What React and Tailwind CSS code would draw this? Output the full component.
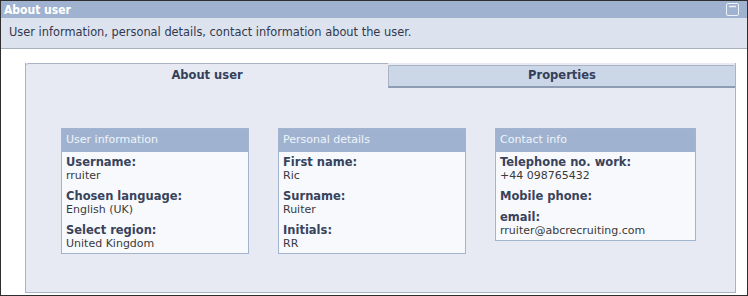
import React from 'react';

const cards = [
  {
    title: 'User information',
    width: 'w-[188px]',
    fields: [
      ['Username:', 'rruiter'],
      ['Chosen language:', 'English (UK)'],
      ['Select region:', 'United Kingdom'],
    ],
  },
  {
    title: 'Personal details',
    width: 'w-[188px]',
    fields: [
      ['First name:', 'Ric'],
      ['Surname:', 'Ruiter'],
      ['Initials:', 'RR'],
    ],
  },
  {
    title: 'Contact info',
    width: 'w-[201px]',
    fields: [
      ['Telephone no. work:', '+44 098765432'],
      ['Mobile phone:', ''],
      ['email:', 'rruiter@abcrecruiting.com'],
    ],
  },
];

const InfoCard = ({ card }) => (
  <div className={`${card.width} border border-[#a3b4cf] bg-[#f7f9fd]`}>
    <div className="h-[23px] bg-[#9fb3d1] px-[4px] flex items-center text-[11px] text-[#f0f3f9]">
      {card.title}
    </div>
    <div className="px-[4px] pt-[4px] pb-[3px] flex flex-col gap-[8px]">
      {card.fields.map(([label, value]) => (
        <div key={label} className="leading-[13px]">
          <div className="font-bold text-[#38435c] text-[11.5px]">{label}</div>
          {value && <div className="text-[#3a3a3a] text-[11px]">{value}</div>}
        </div>
      ))}
    </div>
  </div>
);

const App = () => {
  return (
    <div className="w-[748px] h-[296px] border border-[#2e2e2e] bg-white flex flex-col font-['DejaVu_Sans',sans-serif] overflow-hidden">
      <div className="h-[17px] bg-[#9fb3d1] flex items-center justify-between pl-[3px] pr-[8px]">
        <span className="text-white font-bold text-[12px] font-['DejaVu_Sans_Condensed','DejaVu_Sans',sans-serif]">About user</span>
        <svg width="13" height="13" viewBox="0 0 13 13">
          <rect x="0.5" y="0.5" width="12" height="12" rx="1.5" fill="none" stroke="#eef2f8" strokeWidth="1" />
          <line x1="3" y1="3.5" x2="10" y2="3.5" stroke="#eef2f8" strokeWidth="1.5" />
        </svg>
      </div>
      <div className="h-[31px] bg-[#dce3ef] border-b border-[#a9b0bd] px-[8px] flex items-center text-[11.4px] text-[#33384d]">
        User information, personal details, contact information about the user.
      </div>
      <div className="flex-1 pt-[14px] pl-[24px] pr-[11px] pb-[2px] flex">
        <div className="w-[711px] flex flex-col bg-[#e7eaf3] border-l border-r border-b border-[#a9b3c4]">
          <div className="flex">
            <div className="w-[362px] h-[25px] border-t border-[#a9b3c4] rounded-tl-[3px] flex items-center justify-center font-bold text-[11.5px] text-[#34405a]">
              About user
            </div>
            <div className="flex-1 mt-[2px] h-[23px] bg-[#cbd6e6] border-t border-l border-[#a9b3c4] border-b-2 border-b-[#8d9bb3] rounded-t-[2px] flex items-center justify-center font-bold text-[11.5px] text-[#34405a]">
              Properties
            </div>
          </div>
          <div className="pt-[40px] pl-[35px] flex items-start gap-[29px]">
            {cards.map((card) => (
              <InfoCard key={card.title} card={card} />
            ))}
          </div>
        </div>
      </div>
    </div>
  );
};

export default App;
